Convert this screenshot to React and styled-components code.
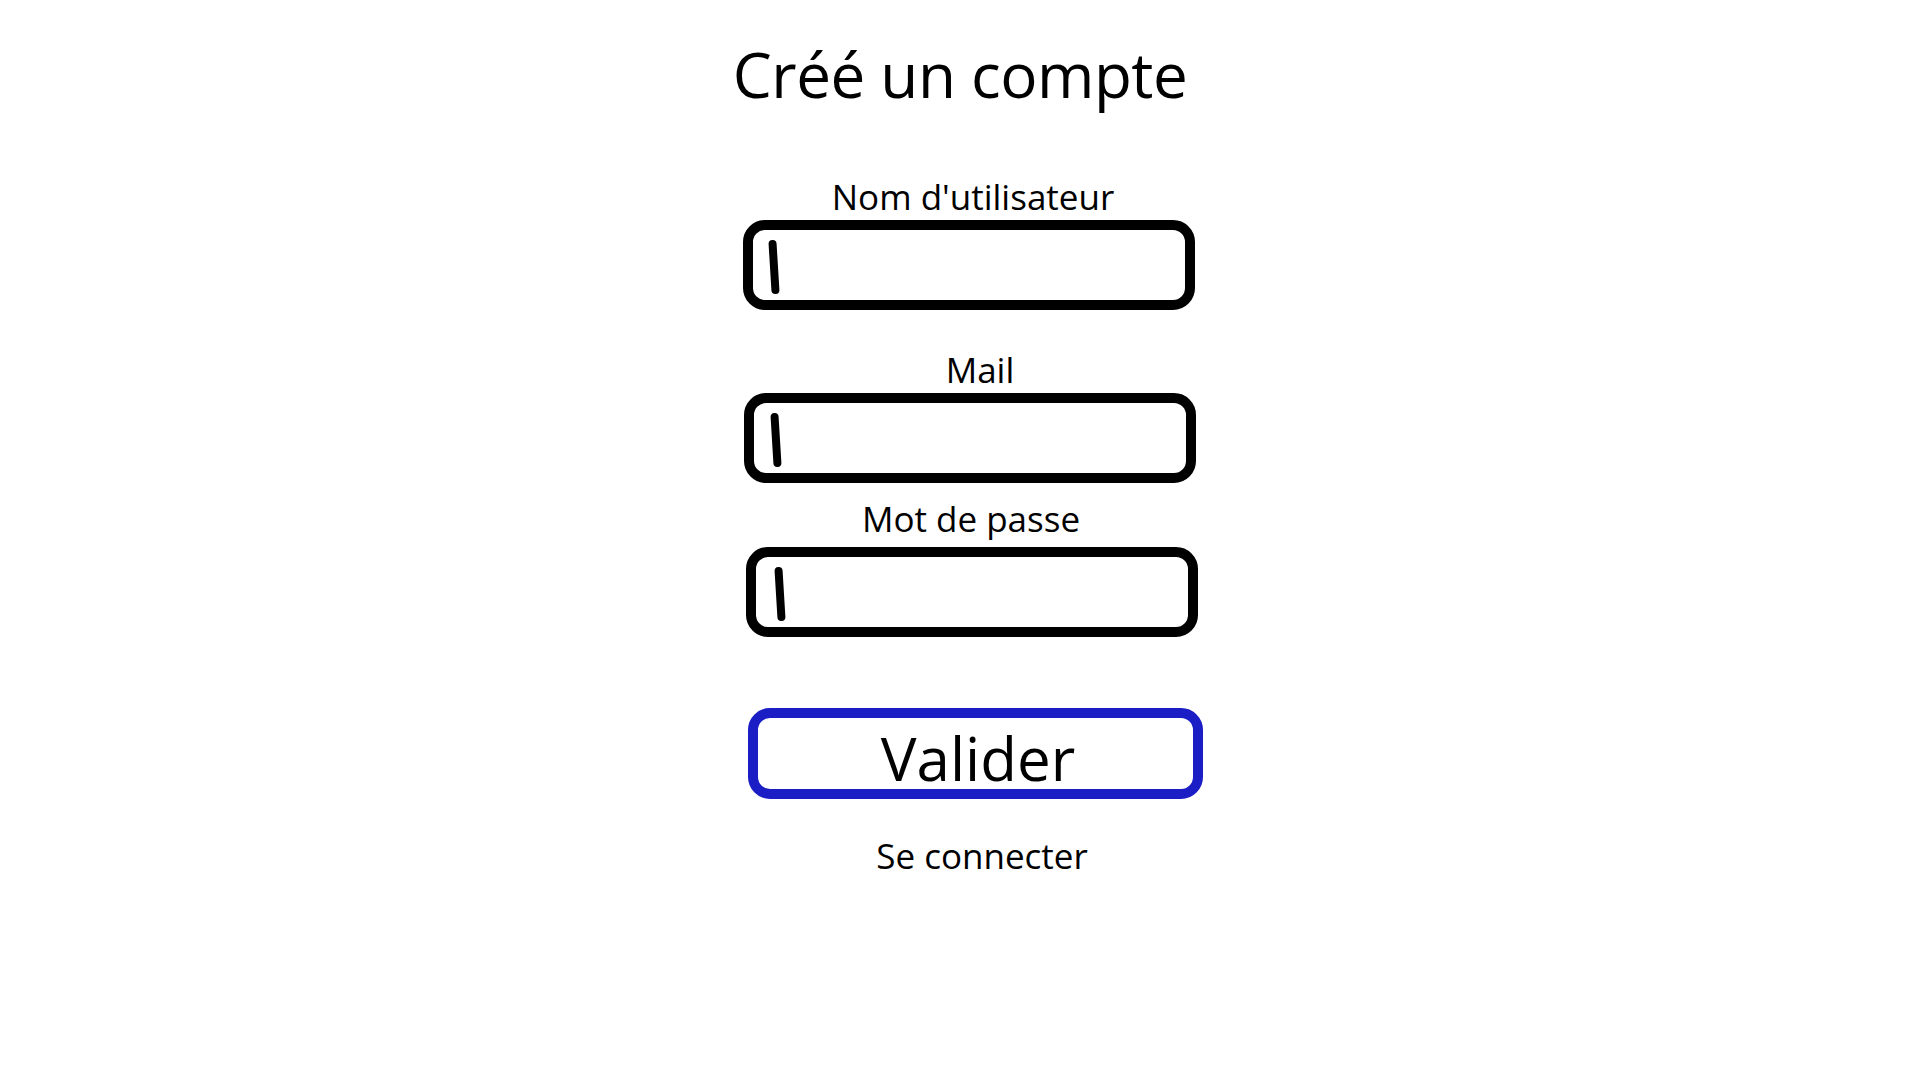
import React from "react";
import styled, { createGlobalStyle } from "styled-components";

const GlobalStyle = createGlobalStyle`
  html, body {
    margin: 0;
    padding: 0;
    background: #ffffff;
  }
  body {
    font-family: "Open Sans", "Noto Sans", sans-serif;
    color: #000000;
  }
`;

const Page = styled.div`
  display: flex;
  flex-direction: column;
  align-items: center;
  padding-top: 34px;
  min-height: 100vh;
  box-sizing: border-box;
`;

const Title = styled.h1`
  margin: 0 0 63px;
  font-size: 62px;
  font-weight: 400;
  line-height: 80px;
  letter-spacing: -0.5px;
`;

const Label = styled.label`
  display: block;
  margin-top: ${(p) => p.$top || 0}px;
  margin-bottom: ${(p) => p.$bottom || 3}px;
  margin-left: ${(p) => (p.$shift || 0) * 2}px;
  font-size: 35px;
  line-height: 40px;
`;

const Field = styled.div`
  display: flex;
  align-items: flex-start;
  width: 452px;
  height: 90px;
  box-sizing: border-box;
  padding: 10px 0 0 ${(p) => p.$caret || 17}px;
  margin-left: ${(p) => (p.$shift || 0) * 2}px;
  border: 10px solid #000000;
  border-radius: 22px;
`;

const Caret = styled.span`
  display: block;
  width: 8px;
  height: 54px;
  border-radius: 4px;
  background: #000000;
  transform: rotate(-3.5deg);
`;

const Button = styled.button`
  width: 455px;
  height: 91px;
  margin-top: 71px;
  margin-left: ${(p) => (p.$shift || 0) * 2}px;
  padding: 9px 0 0 6px;
  box-sizing: border-box;
  border: 10px solid #1a1ec4;
  border-radius: 22px;
  background: #ffffff;
  font-family: "Open Sans", "Noto Sans", sans-serif;
  font-size: 60px;
  line-height: 1;
  color: #000000;
  display: flex;
  align-items: center;
  justify-content: center;
`;

const LinkText = styled.a`
  display: block;
  margin-top: 37px;
  margin-left: ${(p) => (p.$shift || 0) * 2}px;
  font-size: 35px;
  line-height: 40px;
  color: #000000;
  text-decoration: none;
`;

const fields = [
  { label: "Nom d'utilisateur", labelShift: 13, fieldShift: 9, top: 0, caret: 17 },
  { label: "Mail", labelShift: 20, fieldShift: 10, top: 40, caret: 18 },
  { label: "Mot de passe", labelShift: 11, fieldShift: 12, top: 16, bottom: 8, caret: 20 },
];

const App = () => {
  return (
    <>
      <GlobalStyle />
      <Page>
        <Title>Créé un compte</Title>
        {fields.map((f) => (
          <React.Fragment key={f.label}>
            <Label $shift={f.labelShift} $top={f.top} $bottom={f.bottom}>
              {f.label}
            </Label>
            <Field $shift={f.fieldShift} $caret={f.caret}>
              <Caret />
            </Field>
          </React.Fragment>
        ))}
        <Button $shift={15}>Valider</Button>
        <LinkText $shift={22} href="#">
          Se connecter
        </LinkText>
      </Page>
    </>
  );
};

export default App;
